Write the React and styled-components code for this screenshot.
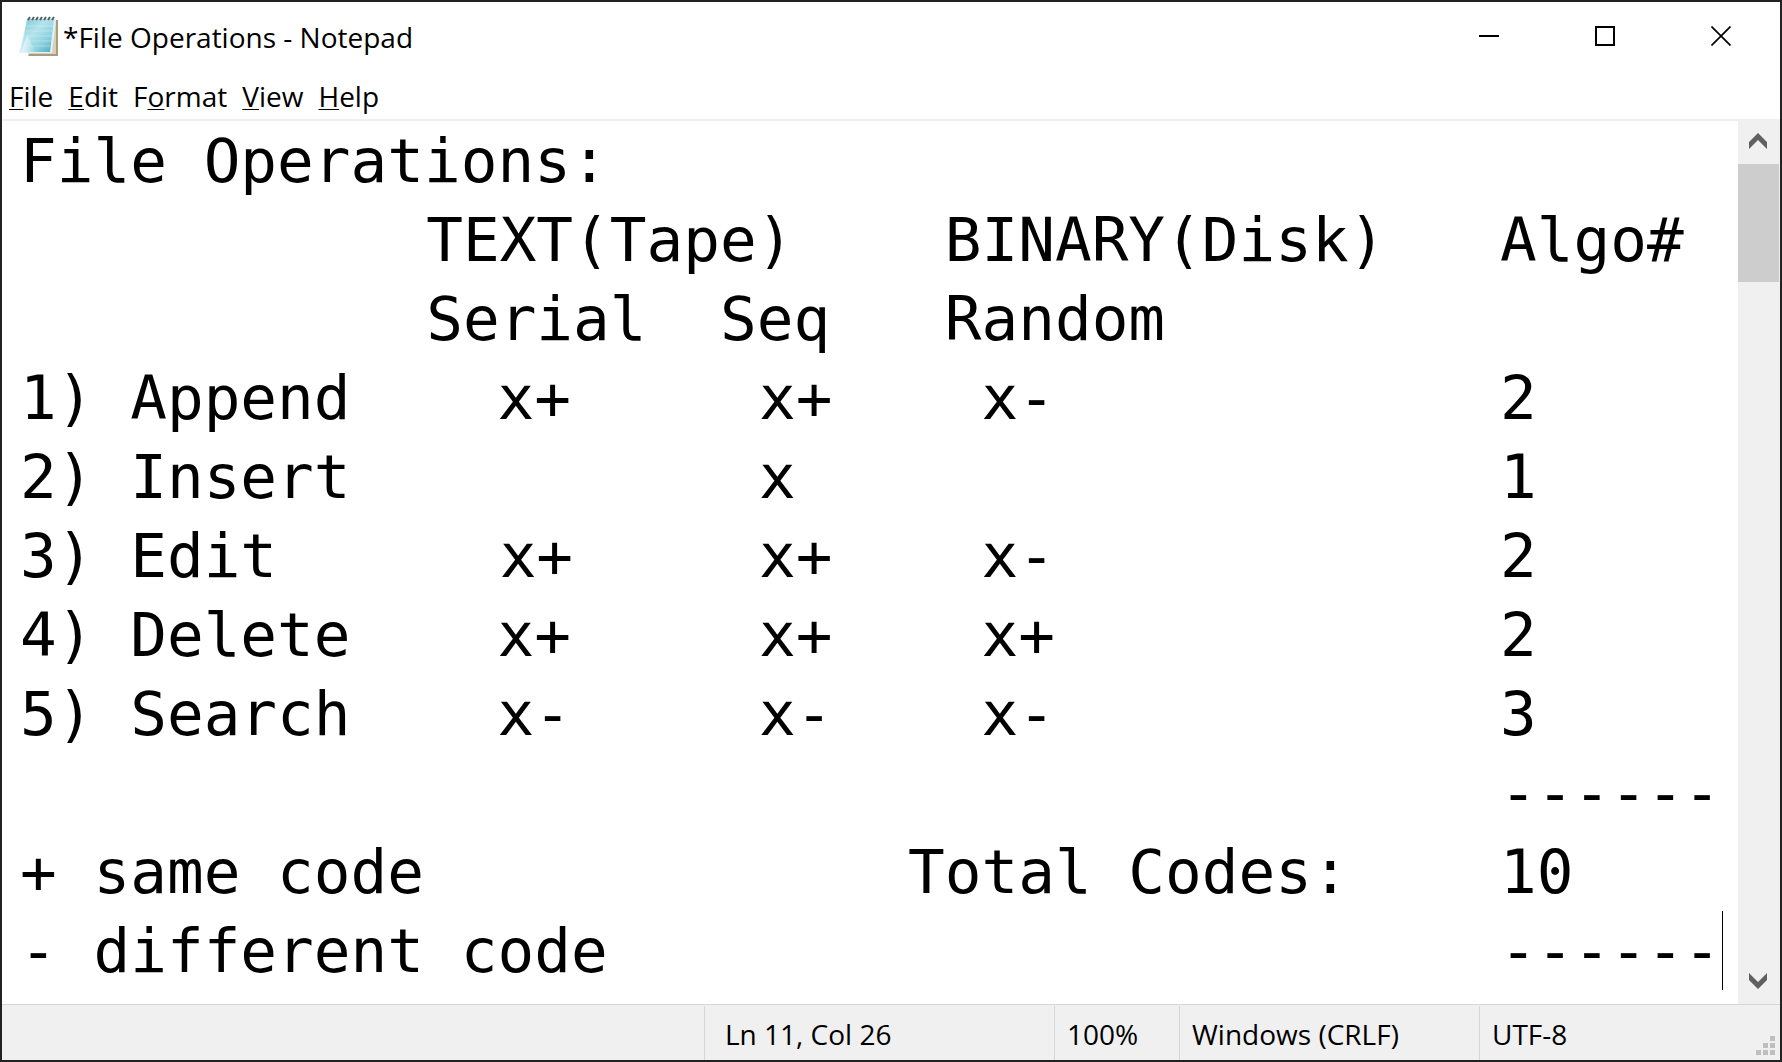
import React from "react";
import styled, { createGlobalStyle } from "styled-components";

const GlobalStyle = createGlobalStyle`
  * { box-sizing: border-box; }
  html, body, #root { height: 100%; }
  body {
    margin: 0;
    background: #222222;
    color: #000000;
    font-family: "Open Sans", "Noto Sans", sans-serif;
    font-size: 28px;
    line-height: 40px;
  }
`;

const Window = styled.div`
  display: flex;
  flex-direction: column;
  height: 100%;
  border: 2px solid #222222;
  background: #ffffff;
`;

const TitleBar = styled.header`
  display: flex;
  align-items: flex-start;
  height: 74px;
  padding: 0 1px 0 16px;
`;

const TitleIcon = styled.svg`
  flex: none;
  width: 42px;
  height: 42px;
  margin-top: 13px;
`;

const Title = styled.h1`
  flex: 1;
  margin: 0;
  padding: 15px 0 0 3px;
  font-size: inherit;
  font-weight: 400;
  white-space: nowrap;
`;

const CaptionButton = styled.button`
  display: flex;
  align-items: center;
  justify-content: center;
  width: 116px;
  height: 68px;
  padding: 0;
  border: 0;
  background: transparent;
  &:hover { background: #e5e5e5; }
`;

const MenuBar = styled.nav`
  display: flex;
  gap: 15px;
  height: 45px;
  padding-left: 7px;
  border-bottom: 2px solid #f0f0f0;
`;

const MenuItem = styled.button`
  height: 40px;
  padding: 0;
  border: 0;
  background: transparent;
  color: inherit;
  font: inherit;
  u {
    text-decoration-thickness: 1px;
    text-underline-offset: 2px;
  }
`;

const Body = styled.main`
  display: flex;
  flex: 1;
  min-height: 0;
`;

const Editor = styled.div`
  position: relative;
  flex: 1;
  display: flex;
`;

const TextArea = styled.textarea`
  flex: 1;
  min-width: 0;
  padding: 0 0 0 18px;
  border: 0;
  outline: 0;
  resize: none;
  overflow: hidden;
  background: #ffffff;
  color: #000000;
  font-family: "DejaVu Sans Mono", monospace;
  font-size: 61px;
  line-height: 79px;
  white-space: pre;
  tab-size: 296px;
`;

const Caret = styled.span`
  position: absolute;
  right: 15px;
  bottom: 14px;
  width: 1px;
  height: 79px;
  background: #000000;
`;

const ScrollBar = styled.div`
  display: flex;
  flex-direction: column;
  flex: none;
  width: 42px;
  background: #f0f0f0;
`;

const ScrollButton = styled.button`
  display: flex;
  align-items: center;
  justify-content: center;
  width: 40px;
  height: 43px;
  padding: 0 0 3px;
  border: 0;
  background: transparent;
`;

const ScrollTrack = styled.div`
  flex: 1;
  padding-right: 1px;
`;

const ScrollThumb = styled.div`
  height: 118px;
  background: #cdcdcd;
`;

const StatusBar = styled.footer`
  display: flex;
  justify-content: flex-end;
  height: 56px;
  padding-top: 1px;
  border-top: 1px solid #d7d7d7;
  background: #f0f0f0;
`;

const StatusCell = styled.div`
  display: flex;
  justify-content: space-between;
  width: ${(p) => p.$width}px;
  padding: 8px 5px 0 ${(p) => (p.$wide ? 20 : 12)}px;
  border-left: 1px solid #d7d7d7;
  white-space: nowrap;
`;

const Grip = styled.svg`
  flex: none;
  align-self: flex-end;
  width: 19px;
  height: 19px;
  margin-bottom: 5px;
`;

const menus = [
  ["", "F", "ile"],
  ["", "E", "dit"],
  ["F", "o", "rmat"],
  ["", "V", "iew"],
  ["", "H", "elp"],
];

const documentText = [
  "File Operations:",
  "\t   TEXT(Tape)\t BINARY(Disk)\tAlgo#",
  "\t   Serial  Seq\t Random",
  "1) Append    x+\t    x+\t  x-\t\t2",
  "2) Insert\t    x\t\t\t1",
  "3) Edit\t     x+\t    x+\t  x-\t\t2",
  "4) Delete    x+\t    x+\t  x+\t\t2",
  "5) Search    x-\t    x-\t  x-\t\t3",
  "\t\t\t\t\t------",
  "+ same code\t\tTotal Codes:\t10",
  "- different code\t\t\t------",
].join("\n");

function NotepadIcon() {
  return (
    <TitleIcon viewBox="0 0 42 42" aria-hidden="true">
      <defs>
        <linearGradient id="page" x1="0" y1="0" x2="1" y2="1">
          <stop offset="0" stopColor="#7cc4d6" />
          <stop offset="0.4" stopColor="#b4e3ec" />
          <stop offset="0.7" stopColor="#8bd0de" />
          <stop offset="1" stopColor="#4aa6c0" />
        </linearGradient>
        <linearGradient id="curl" x1="0" y1="0" x2="1" y2="0">
          <stop offset="0" stopColor="#e8f7fa" />
          <stop offset="1" stopColor="#e8f7fa" stopOpacity="0" />
        </linearGradient>
      </defs>
      <path d="M12 37L37 5H40V41H10z" fill="#a89c80" />
      <path d="M12 36L36 5H38V39H10z" fill="#d9d0ba" />
      <path d="M9 4H38L34 38H1z" fill="#dff2f7" />
      <path d="M9 4H36L32 37H3z" fill="url(#page)" />
      <path d="M9 20L3 37H18z" fill="url(#curl)" />
      <path d="M8 11H35M7 16H34M6 21H34M5 26H33M4 31H33" stroke="#d8f3f8" strokeWidth="1" opacity="0.45" />
      <path d="M10 5l2-3M14 5l2-3M18 5l2-3M22 5l2-3M26 5l2-3M30 5l2-3M34 5l2-3" stroke="#4f5f66" strokeWidth="2" />
    </TitleIcon>
  );
}

export default function App() {
  return (
    <>
      <GlobalStyle />
      <Window>
        <TitleBar>
          <NotepadIcon />
          <Title>*File Operations - Notepad</Title>
          <CaptionButton aria-label="Minimize">
            <svg width="20" height="20"><path d="M0 10h20" stroke="#000" strokeWidth="2" /></svg>
          </CaptionButton>
          <CaptionButton aria-label="Maximize">
            <svg width="20" height="20"><rect x="1" y="1" width="18" height="18" fill="none" stroke="#000" strokeWidth="2" /></svg>
          </CaptionButton>
          <CaptionButton aria-label="Close">
            <svg width="20" height="20"><path d="M0.5 0.5L19.5 19.5M19.5 0.5L0.5 19.5" stroke="#000" strokeWidth="1.7" /></svg>
          </CaptionButton>
        </TitleBar>
        <MenuBar aria-label="Menu">
          {menus.map(([before, key, after]) => (
            <MenuItem key={before + key + after}>
              {before}<u>{key}</u>{after}
            </MenuItem>
          ))}
        </MenuBar>
        <Body>
          <Editor>
            <TextArea aria-label="Document text" spellCheck={false} wrap="off" defaultValue={documentText} />
            <Caret />
          </Editor>
          <ScrollBar>
            <ScrollButton aria-label="Scroll up">
              <svg width="18" height="16"><path d="M9 0L18 9V16L9 7L0 16V9z" fill="#606060" /></svg>
            </ScrollButton>
            <ScrollTrack><ScrollThumb /></ScrollTrack>
            <ScrollButton aria-label="Scroll down">
              <svg width="18" height="16"><path d="M9 16L18 7V0L9 9L0 0V7z" fill="#606060" /></svg>
            </ScrollButton>
          </ScrollBar>
        </Body>
        <StatusBar>
          <StatusCell $width={350} $wide>Ln 11, Col 26</StatusCell>
          <StatusCell $width={125}>100%</StatusCell>
          <StatusCell $width={300}>Windows (CRLF)</StatusCell>
          <StatusCell $width={301}>
            UTF-8
            <Grip viewBox="0 0 19 19" aria-hidden="true">
              <path d="M14 0h5v5h-5zM7 7h5v5h-5zM14 7h5v5h-5zM0 14h5v5h-5zM7 14h5v5h-5zM14 14h5v5h-5z" fill="#bfbfbf" />
            </Grip>
          </StatusCell>
        </StatusBar>
      </Window>
    </>
  );
}
